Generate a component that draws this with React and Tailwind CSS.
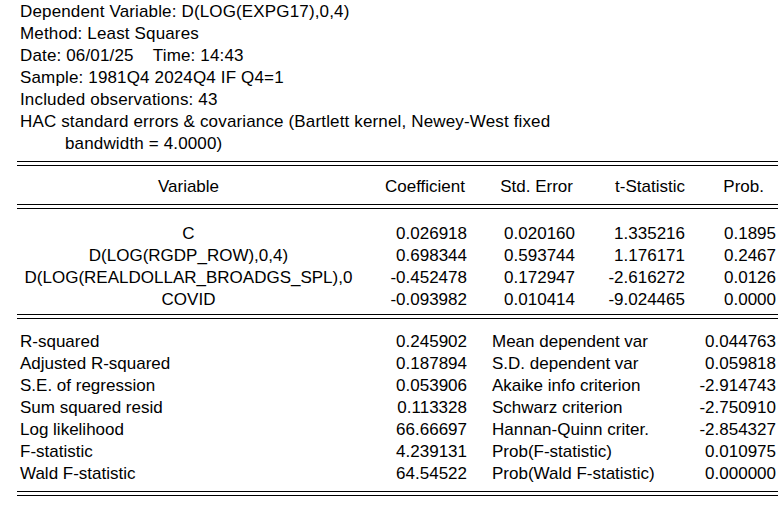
import React from "react";

const header = [
  "Dependent Variable: D(LOG(EXPG17),0,4)",
  "Method: Least Squares",
  "Date: 06/01/25    Time: 14:43",
  "Sample: 1981Q4 2024Q4 IF Q4=1",
  "Included observations: 43",
  "HAC standard errors & covariance (Bartlett kernel, Newey-West fixed",
];

const coefs = [
  ["C", "0.026918", "0.020160", "1.335216", "0.1895"],
  ["D(LOG(RGDP_ROW),0,4)", "0.698344", "0.593744", "1.176171", "0.2467"],
  ["D(LOG(REALDOLLAR_BROADGS_SPL),0", "-0.452478", "0.172947", "-2.616272", "0.0126"],
  ["COVID", "-0.093982", "0.010414", "-9.024465", "0.0000"],
];

const stats = [
  ["R-squared", "0.245902", "Mean dependent var", "0.044763"],
  ["Adjusted R-squared", "0.187894", "S.D. dependent var", "0.059818"],
  ["S.E. of regression", "0.053906", "Akaike info criterion", "-2.914743"],
  ["Sum squared resid", "0.113328", "Schwarz criterion", "-2.750910"],
  ["Log likelihood", "66.66697", "Hannan-Quinn criter.", "-2.854327"],
  ["F-statistic", "4.239131", "Prob(F-statistic)", "0.010975"],
  ["Wald F-statistic", "64.54522", "Prob(Wald F-statistic)", "0.000000"],
];

function DoubleRule() {
  return <div className="h-[5px] border-y border-black" />;
}

export default function App() {
  return (
    <div className="w-[780px] h-[508px] bg-white text-black overflow-hidden font-['Liberation_Sans',Arial,sans-serif] text-[17px] leading-[22px]">
      {/* estimation header */}
      <div className="pt-[1px] pl-[20px] whitespace-pre tracking-[0.15px]">
        {header.map((line) => (
          <div key={line}>{line}</div>
        ))}
        <div className="pl-[45px]">bandwidth = 4.0000)</div>
      </div>

      <div className="ml-[17px] w-[761px] mt-[6px]">
        <DoubleRule />

        {/* column titles */}
        <div className="grid grid-cols-[343px_107px_108px_110px_91px] h-[38px] items-center pt-[4px]">
          <div className="text-center">Variable</div>
          <div className="text-right pr-[2px]">Coefficient</div>
          <div className="text-right pr-[2px]">Std. Error</div>
          <div className="text-right">t-Statistic</div>
          <div className="text-right pr-[12px]">Prob.</div>
        </div>

        <DoubleRule />

        {/* coefficients */}
        <div className="pt-[14px] pb-[3px]">
          {coefs.map(([name, c, se, t, p]) => (
            <div key={name} className="grid grid-cols-[343px_107px_108px_110px_91px]">
              <div className="text-center whitespace-nowrap">{name}</div>
              <div className="text-right">{c}</div>
              <div className="text-right">{se}</div>
              <div className="text-right">{t}</div>
              <div className="text-right">{p}</div>
            </div>
          ))}
        </div>

        <DoubleRule />

        {/* summary stats */}
        <div className="pt-[12px] pb-[6px] pr-[2px]">
          {stats.map(([l1, v1, l2, v2]) => (
            <div key={l1} className="grid grid-cols-[343px_107px_1fr_auto]">
              <div className="pl-[3px] whitespace-nowrap">{l1}</div>
              <div className="text-right">{v1}</div>
              <div className="pl-[25px] whitespace-nowrap">{l2}</div>
              <div className="text-right">{v2}</div>
            </div>
          ))}
        </div>

        <DoubleRule />
      </div>
    </div>
  );
}
